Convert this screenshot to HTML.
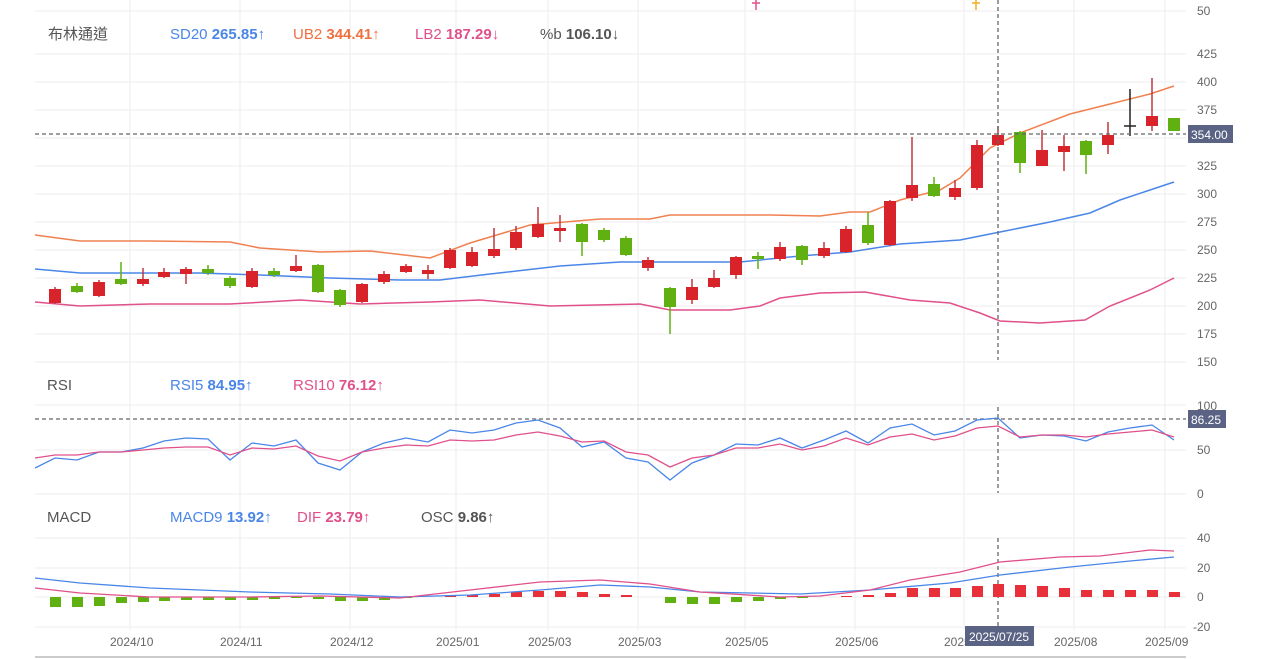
<!DOCTYPE html>
<html><head><meta charset="utf-8"><style>
html,body{margin:0;padding:0;background:#fff;width:1280px;height:659px;overflow:hidden}
svg{display:block;font-family:"Liberation Sans","Noto Sans CJK TC",sans-serif}
.ax{font-size:12px;fill:#666}
.lb{font-size:15px}
.r{fill:#d9232a}.g{fill:#5fb010}
.rw{stroke:#c0393e;stroke-width:1.5}.gw{stroke:#5fb010;stroke-width:1.5}
</style></head><body>
<svg width="1280" height="659" viewBox="0 0 1280 659">
<!-- grid -->
<g stroke="#eeeeee" stroke-width="1">
<line x1="35" y1="11" x2="1186" y2="11"/>
<line x1="35" y1="54" x2="1186" y2="54"/><line x1="35" y1="82" x2="1186" y2="82"/><line x1="35" y1="110" x2="1186" y2="110"/><line x1="35" y1="138" x2="1186" y2="138"/><line x1="35" y1="166" x2="1186" y2="166"/><line x1="35" y1="194" x2="1186" y2="194"/><line x1="35" y1="222" x2="1186" y2="222"/><line x1="35" y1="250" x2="1186" y2="250"/><line x1="35" y1="278" x2="1186" y2="278"/><line x1="35" y1="306" x2="1186" y2="306"/><line x1="35" y1="334" x2="1186" y2="334"/><line x1="35" y1="362" x2="1186" y2="362"/>
<line x1="35" y1="405" x2="1186" y2="405"/><line x1="35" y1="450" x2="1186" y2="450"/><line x1="35" y1="494" x2="1186" y2="494"/>
<line x1="35" y1="538" x2="1186" y2="538"/><line x1="35" y1="568" x2="1186" y2="568"/><line x1="35" y1="597" x2="1186" y2="597"/><line x1="35" y1="627" x2="1186" y2="627"/>
<g>
<line x1="130" y1="0" x2="130" y2="630"/><line x1="240" y1="0" x2="240" y2="630"/><line x1="350" y1="0" x2="350" y2="630"/><line x1="456" y1="0" x2="456" y2="630"/><line x1="548" y1="0" x2="548" y2="630"/><line x1="638" y1="0" x2="638" y2="630"/><line x1="745" y1="0" x2="745" y2="630"/><line x1="855" y1="0" x2="855" y2="630"/><line x1="964" y1="0" x2="964" y2="630"/><line x1="1074" y1="0" x2="1074" y2="630"/><line x1="1165" y1="0" x2="1165" y2="630"/>
</g></g>
<line x1="35" y1="657" x2="1186" y2="657" stroke="#ccc" stroke-width="2"/>
<!-- top remnants -->
<line x1="756" y1="0" x2="756" y2="10" stroke="#e0508a" stroke-width="1.5"/><line x1="752" y1="3" x2="760" y2="3" stroke="#e0508a" stroke-width="1.5"/>
<line x1="976" y1="0" x2="976" y2="10" stroke="#f5b020" stroke-width="1.5"/><line x1="972" y1="3" x2="980" y2="3" stroke="#f5b020" stroke-width="1.5"/>
<!-- axis labels -->
<g class="ax">
<text x="1197" y="15">50</text>
<text x="1197" y="58">425</text><text x="1197" y="86">400</text><text x="1197" y="114">375</text><text x="1197" y="170">325</text><text x="1197" y="198">300</text><text x="1197" y="226">275</text><text x="1197" y="254">250</text><text x="1197" y="282">225</text><text x="1197" y="310">200</text><text x="1197" y="338">175</text><text x="1197" y="366">150</text>
<text x="1197" y="410">100</text><text x="1197" y="454">50</text><text x="1197" y="498">0</text>
<text x="1197" y="542">40</text><text x="1197" y="572">20</text><text x="1197" y="601">0</text><text x="1193" y="631">-20</text>
<text x="110" y="646">2024/10</text><text x="220" y="646">2024/11</text><text x="330" y="646">2024/12</text><text x="436" y="646">2025/01</text><text x="528" y="646">2025/03</text><text x="618" y="646">2025/03</text><text x="725" y="646">2025/05</text><text x="835" y="646">2025/06</text><text x="944" y="646">2025</text><text x="1054" y="646">2025/08</text><text x="1145" y="646">2025/09</text>
</g>
<!-- headers -->
<g class="lb">
<text x="48" y="39" fill="#555">布林通道</text>
<text x="170" y="39" fill="#4a86e8">SD20 <tspan font-weight="bold">265.85</tspan>↑</text>
<text x="293" y="39" fill="#f07040">UB2 <tspan font-weight="bold">344.41</tspan>↑</text>
<text x="415" y="39" fill="#e0508a">LB2 <tspan font-weight="bold">187.29</tspan>↓</text>
<text x="540" y="39" fill="#555">%b <tspan font-weight="bold">106.10</tspan>↓</text>
<text x="47" y="390" fill="#555">RSI</text>
<text x="170" y="390" fill="#4a86e8">RSI5 <tspan font-weight="bold">84.95</tspan>↑</text>
<text x="293" y="390" fill="#e0508a">RSI10 <tspan font-weight="bold">76.12</tspan>↑</text>
<text x="47" y="522" fill="#555">MACD</text>
<text x="170" y="522" fill="#4a86e8">MACD9 <tspan font-weight="bold">13.92</tspan>↑</text>
<text x="297" y="522" fill="#e0508a">DIF <tspan font-weight="bold">23.79</tspan>↑</text>
<text x="421" y="522" fill="#555">OSC <tspan font-weight="bold">9.86</tspan>↑</text>
</g>
<!-- bollinger -->
<polyline fill="none" stroke="#f08050" stroke-width="1.5" points="35,235 80,241 150,241 230,242 260,248 320,252 370,251 430,258 470,243 530,225 600,219 650,219 670,215 770,215 820,216 850,212 870,212 900,200 940,190 960,178 990,148 1020,133 1070,114 1110,104 1150,94 1174,86"/>
<polyline fill="none" stroke="#4a86e8" stroke-width="1.5" points="35,269 80,273 200,273 260,275 330,278 400,280 440,280 490,274 560,266 620,262 740,262 800,256 850,252 900,244 960,240 1000,232 1050,222 1090,213 1120,200 1150,190 1174,182"/>
<polyline fill="none" stroke="#e0508a" stroke-width="1.5" points="35,302 80,306 150,304 230,304 300,300 360,304 430,302 480,300 550,306 640,304 670,310 730,310 760,306 780,298 820,293 865,292 910,300 950,303 980,313 1000,321 1040,323 1085,320 1110,306 1150,290 1174,278"/>
<!-- candles -->
<g>
<line class="rw" x1="55" y1="287" x2="55" y2="304"/><rect class="r" x="49" y="289" width="12" height="14"/>
<line class="gw" x1="77" y1="283" x2="77" y2="293"/><rect class="g" x="71" y="286" width="12" height="6"/>
<line class="rw" x1="99" y1="280" x2="99" y2="297"/><rect class="r" x="93" y="282" width="12" height="14"/>
<line class="gw" x1="121" y1="262" x2="121" y2="285"/><rect class="g" x="115" y="279" width="12" height="5"/>
<line class="rw" x1="143" y1="268" x2="143" y2="286"/><rect class="r" x="137" y="279" width="12" height="5"/>
<line class="rw" x1="164" y1="268" x2="164" y2="278"/><rect class="r" x="158" y="272" width="12" height="5"/>
<line class="rw" x1="186" y1="267" x2="186" y2="284"/><rect class="r" x="180" y="269" width="12" height="5"/>
<line class="gw" x1="208" y1="265" x2="208" y2="275"/><rect class="g" x="202" y="269" width="12" height="4"/>
<line class="gw" x1="230" y1="276" x2="230" y2="288"/><rect class="g" x="224" y="278" width="12" height="8"/>
<line class="rw" x1="252" y1="268" x2="252" y2="288"/><rect class="r" x="246" y="271" width="12" height="16"/>
<line class="gw" x1="274" y1="268" x2="274" y2="277"/><rect class="g" x="268" y="271" width="12" height="4"/>
<line class="rw" x1="296" y1="255" x2="296" y2="272"/><rect class="r" x="290" y="266" width="12" height="5"/>
<line class="gw" x1="318" y1="264" x2="318" y2="293"/><rect class="g" x="312" y="265" width="12" height="27"/>
<line class="gw" x1="340" y1="289" x2="340" y2="307"/><rect class="g" x="334" y="290" width="12" height="15"/>
<line class="rw" x1="362" y1="283" x2="362" y2="303"/><rect class="r" x="356" y="284" width="12" height="18"/>
<line class="rw" x1="384" y1="271" x2="384" y2="284"/><rect class="r" x="378" y="274" width="12" height="8"/>
<line class="rw" x1="406" y1="264" x2="406" y2="273"/><rect class="r" x="400" y="266" width="12" height="6"/>
<line class="rw" x1="428" y1="265" x2="428" y2="279"/><rect class="r" x="422" y="270" width="12" height="4"/>
<line class="rw" x1="450" y1="248" x2="450" y2="269"/><rect class="r" x="444" y="250" width="12" height="18"/>
<line class="rw" x1="472" y1="247" x2="472" y2="267"/><rect class="r" x="466" y="252" width="12" height="14"/>
<line class="rw" x1="494" y1="228" x2="494" y2="258"/><rect class="r" x="488" y="249" width="12" height="7"/>
<line class="rw" x1="516" y1="226" x2="516" y2="250"/><rect class="r" x="510" y="232" width="12" height="16"/>
<line class="rw" x1="538" y1="207" x2="538" y2="238"/><rect class="r" x="532" y="224" width="12" height="13"/>
<line class="rw" x1="560" y1="215" x2="560" y2="242"/><rect class="r" x="554" y="228" width="12" height="3"/>
<line class="gw" x1="582" y1="223" x2="582" y2="256"/><rect class="g" x="576" y="224" width="12" height="18"/>
<line class="gw" x1="604" y1="228" x2="604" y2="242"/><rect class="g" x="598" y="230" width="12" height="10"/>
<line class="gw" x1="626" y1="236" x2="626" y2="256"/><rect class="g" x="620" y="238" width="12" height="17"/>
<line class="rw" x1="648" y1="257" x2="648" y2="271"/><rect class="r" x="642" y="260" width="12" height="8"/>
<line class="gw" x1="670" y1="287" x2="670" y2="334"/><rect class="g" x="664" y="288" width="12" height="19"/>
<line class="rw" x1="692" y1="279" x2="692" y2="304"/><rect class="r" x="686" y="287" width="12" height="13"/>
<line class="rw" x1="714" y1="270" x2="714" y2="288"/><rect class="r" x="708" y="278" width="12" height="9"/>
<line class="rw" x1="736" y1="256" x2="736" y2="279"/><rect class="r" x="730" y="257" width="12" height="18"/>
<line class="gw" x1="758" y1="252" x2="758" y2="269"/><rect class="g" x="752" y="256" width="12" height="3"/>
<line class="rw" x1="780" y1="242" x2="780" y2="261"/><rect class="r" x="774" y="247" width="12" height="12"/>
<line class="gw" x1="802" y1="245" x2="802" y2="265"/><rect class="g" x="796" y="246" width="12" height="14"/>
<line class="rw" x1="824" y1="242" x2="824" y2="258"/><rect class="r" x="818" y="248" width="12" height="8"/>
<line class="rw" x1="846" y1="226" x2="846" y2="253"/><rect class="r" x="840" y="229" width="12" height="23"/>
<line class="gw" x1="868" y1="212" x2="868" y2="245"/><rect class="g" x="862" y="225" width="12" height="18"/>
<line class="rw" x1="890" y1="200" x2="890" y2="246"/><rect class="r" x="884" y="201" width="12" height="44"/>
<line class="rw" x1="912" y1="137" x2="912" y2="201"/><rect class="r" x="906" y="185" width="12" height="13"/>
<line class="gw" x1="934" y1="177" x2="934" y2="197"/><rect class="g" x="928" y="184" width="12" height="12"/>
<line class="rw" x1="955" y1="180" x2="955" y2="200"/><rect class="r" x="949" y="188" width="12" height="9"/>
<line class="rw" x1="977" y1="140" x2="977" y2="190"/><rect class="r" x="971" y="145" width="12" height="43"/>
<line class="rw" x1="998" y1="126" x2="998" y2="146"/><rect class="r" x="992" y="135" width="12" height="10"/>
<line class="gw" x1="1020" y1="131" x2="1020" y2="173"/><rect class="g" x="1014" y="132" width="12" height="31"/>
<line class="rw" x1="1042" y1="130" x2="1042" y2="166"/><rect class="r" x="1036" y="150" width="12" height="16"/>
<line class="rw" x1="1064" y1="135" x2="1064" y2="171"/><rect class="r" x="1058" y="146" width="12" height="6"/>
<line class="gw" x1="1086" y1="140" x2="1086" y2="174"/><rect class="g" x="1080" y="141" width="12" height="14"/>
<line class="rw" x1="1108" y1="122" x2="1108" y2="154"/><rect class="r" x="1102" y="135" width="12" height="10"/>
<line stroke="#222" stroke-width="1.5" x1="1130" y1="89" x2="1130" y2="136"/><line stroke="#222" stroke-width="1.5" x1="1124" y1="126" x2="1136" y2="126"/>
<line class="rw" x1="1152" y1="78" x2="1152" y2="131"/><rect class="r" x="1146" y="116" width="12" height="10"/>
<rect class="g" x="1168" y="118" width="12" height="13"/>
</g>
<!-- crosshairs -->
<g stroke="#666" stroke-width="1.3" stroke-dasharray="4,3">
<line x1="35" y1="134" x2="1186" y2="134"/>
<line x1="35" y1="419" x2="1186" y2="419"/>
<line x1="998" y1="0" x2="998" y2="360"/>
<line x1="998" y1="407" x2="998" y2="493"/>
<line x1="998" y1="538" x2="998" y2="628"/>
</g>
<rect x="1188" y="125" width="45" height="18" fill="#5a6383"/><text x="1191" y="139" font-size="12" fill="#fff">354.00</text>
<rect x="1188" y="410" width="38" height="18" fill="#5a6383"/><text x="1191" y="424" font-size="12" fill="#fff">86.25</text>
<rect x="965" y="626" width="69" height="20" fill="#5a6383"/><text x="969" y="641" font-size="12" fill="#fff">2025/07/25</text>
<!-- RSI -->
<polyline fill="none" stroke="#4a86e8" stroke-width="1.3" points="35,468 55,458 77,460 99,452 121,452 143,448 164,441 186,438 208,439 230,460 252,443 274,446 296,440 318,463 340,470 362,452 384,443 406,438 428,442 450,430 472,433 494,430 516,423 538,420 560,428 582,447 604,442 626,458 648,462 670,480 692,463 714,455 736,444 758,445 780,438 802,448 824,440 846,431 868,443 890,428 912,424 934,435 955,431 977,420 998,418 1020,438 1042,435 1064,436 1086,441 1108,432 1130,428 1152,425 1174,440"/>
<polyline fill="none" stroke="#e0508a" stroke-width="1.3" points="35,458 55,455 77,455 99,452 121,452 143,450 164,448 186,447 208,447 230,455 252,448 274,449 296,446 318,456 340,461 362,452 384,448 406,445 428,446 450,440 472,441 494,440 516,435 538,432 560,436 582,442 604,441 626,452 648,455 670,467 692,458 714,455 736,448 758,448 780,444 802,450 824,446 846,438 868,445 890,437 912,434 934,440 955,436 977,428 998,426 1020,437 1042,435 1064,435 1086,437 1108,434 1130,432 1152,430 1174,437"/>
<!-- MACD histogram -->
<g class="g">
<rect x="50" y="597" width="11" height="10"/><rect x="72" y="597" width="11" height="10"/><rect x="94" y="597" width="11" height="9"/><rect x="116" y="597" width="11" height="6"/><rect x="138" y="597" width="11" height="5"/><rect x="159" y="597" width="11" height="4"/><rect x="181" y="597" width="11" height="3"/><rect x="203" y="597" width="11" height="3"/><rect x="225" y="597" width="11" height="3"/><rect x="247" y="597" width="11" height="3"/><rect x="269" y="597" width="11" height="2"/><rect x="291" y="597" width="11" height="1"/><rect x="313" y="597" width="11" height="2"/><rect x="335" y="597" width="11" height="4"/><rect x="357" y="597" width="11" height="4"/><rect x="379" y="597" width="11" height="3"/><rect x="401" y="597" width="11" height="1"/>
<rect x="665" y="597" width="11" height="6"/><rect x="687" y="597" width="11" height="7"/><rect x="709" y="597" width="11" height="7"/><rect x="731" y="597" width="11" height="5"/><rect x="753" y="597" width="11" height="4"/><rect x="775" y="597" width="11" height="2"/><rect x="797" y="597" width="11" height="1"/>
</g>
<g fill="#e8303a">
<rect x="445" y="596" width="11" height="1"/><rect x="467" y="595" width="11" height="2"/><rect x="489" y="594" width="11" height="3"/><rect x="511" y="592" width="11" height="5"/><rect x="533" y="591" width="11" height="6"/><rect x="555" y="591" width="11" height="6"/><rect x="577" y="592" width="11" height="5"/><rect x="599" y="594" width="11" height="3"/><rect x="621" y="595" width="11" height="2"/>
<rect x="841" y="596" width="11" height="1"/><rect x="863" y="595" width="11" height="2"/><rect x="885" y="593" width="11" height="4"/><rect x="907" y="588" width="11" height="9"/><rect x="929" y="588" width="11" height="9"/><rect x="950" y="588" width="11" height="9"/><rect x="972" y="586" width="11" height="11"/><rect x="993" y="584" width="11" height="13"/><rect x="1015" y="585" width="11" height="12"/><rect x="1037" y="586" width="11" height="11"/><rect x="1059" y="588" width="11" height="9"/><rect x="1081" y="590" width="11" height="7"/><rect x="1103" y="590" width="11" height="7"/><rect x="1125" y="590" width="11" height="7"/><rect x="1147" y="590" width="11" height="7"/><rect x="1169" y="592" width="11" height="5"/>
</g>
<polyline fill="none" stroke="#4a86e8" stroke-width="1.3" points="35,578 80,583 150,588 250,592 330,594 400,597 470,595 540,590 600,585 650,587 700,592 800,594 870,590 950,583 1000,575 1070,567 1130,561 1174,557"/>
<polyline fill="none" stroke="#e0508a" stroke-width="1.3" points="35,588 80,593 150,597 250,597 320,596 400,598 470,590 540,582 600,580 650,584 700,592 780,597 820,596 870,590 910,580 960,572 1000,562 1060,557 1100,556 1150,550 1174,551"/>
</svg>
</body></html>
